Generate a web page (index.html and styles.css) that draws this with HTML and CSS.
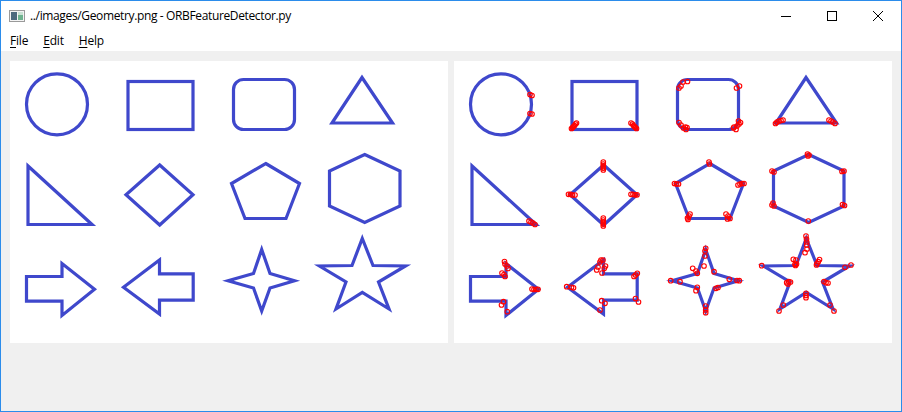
FILE: index.html
```html
<!DOCTYPE html>
<html>
<head>
<meta charset="utf-8">
<link rel="stylesheet" href="styles.css">
</head>
<body>
<div class="window">
  <div class="titlebar">
    <svg class="appicon" width="16" height="12" viewBox="0 0 16 12">
      <rect x="0.5" y="0.5" width="15" height="11" fill="#f4f4f4" stroke="#9a9a9a"/>
      <rect x="2" y="2" width="6" height="8" fill="#4d6a7e"/>
      <rect x="9" y="2" width="5" height="8" fill="#6fb38f"/>
      <rect x="9" y="2" width="5" height="3" fill="#c9e2d4"/>
    </svg>
    <div class="title">../images/Geometry.png - ORBFeatureDetector.py</div>
    <div class="caption">
      <div class="cbtn"><svg width="10" height="10" viewBox="0 0 10 10"><line x1="0" y1="5.5" x2="10" y2="5.5" stroke="#000" stroke-width="1"/></svg></div>
      <div class="cbtn"><svg width="10" height="10" viewBox="0 0 10 10"><rect x="0.5" y="0.5" width="9" height="9" fill="none" stroke="#000" stroke-width="1"/></svg></div>
      <div class="cbtn"><svg width="10" height="10" viewBox="0 0 10 10"><path d="M0 0L10 10M10 0L0 10" stroke="#000" stroke-width="1"/></svg></div>
    </div>
  </div>
  <div class="menubar">
    <span class="menu"><u>F</u>ile</span>
    <span class="menu"><u>E</u>dit</span>
    <span class="menu"><u>H</u>elp</span>
  </div>
  <div class="content">
    <div class="panel">
      <svg width="438" height="282" viewBox="0 0 438 282">
        <defs>
          <g id="shapes" fill="none" stroke="#3f48cc" stroke-width="3.2" stroke-linejoin="miter">
            <circle cx="47" cy="43.3" r="30.5"/>
            <rect x="118" y="20.5" width="65" height="48"/>
            <rect x="223.5" y="18.5" width="61" height="50" rx="10"/>
            <polygon points="352,16.5 322,62 382.5,62"/>
            <polygon points="18,105 18,163.5 82,163.5"/>
            <polygon points="149.7,104 183,133.7 149.7,164 116,133.7"/>
            <polygon points="255.7,102.5 289.5,122.5 276,157.5 235,157.5 221.5,122.5"/>
            <polygon points="354.7,93.5 390,110 390,145 354.7,161.5 319.5,145 319.5,110"/>
            <polygon points="16.5,215.5 52,215.5 52,202.5 84.5,228.3 52,254.5 52,240.2 16.5,240.2"/>
            <polygon points="113.5,226.3 149.5,199 149.5,212.8 183.2,212.8 183.2,239.2 149.5,239.2 149.5,253"/>
            <polygon points="251.7,188.5 260,212.5 284.5,219.7 260,227 251.7,250 243.5,227 218,219.7 243.5,212.5"/>
            <polygon points="352.3,177.5 363,204.5 395.5,205 368.5,221 379,248 352.3,231.5 326,248 336,221 309.5,205 342,204.5"/>
          </g>
        </defs>
        <use href="#shapes"/>
      </svg>
    </div>
    <div class="panel">
      <svg width="438" height="282" viewBox="0 0 438 282">
        <use href="#shapes"/>
        <g fill="none" stroke="#ff0000" stroke-width="1.1">
          <!-- circle -->
          <circle cx="76" cy="33.5" r="2.3"/><circle cx="78" cy="34.5" r="2.3"/>
          <circle cx="76" cy="52.5" r="2.3"/><circle cx="78" cy="53" r="2.3"/>
          <!-- rect -->
          <circle cx="117.5" cy="67.5" r="2.3"/><circle cx="118.5" cy="66.5" r="2.3"/><circle cx="119.5" cy="65.5" r="2.3"/><circle cx="120.5" cy="64.5" r="2.3"/><circle cx="121.5" cy="63" r="2.3"/><circle cx="122.5" cy="62" r="2.3"/><circle cx="118" cy="67" r="1.5"/><circle cx="120" cy="65" r="1.5"/>
          <circle cx="178.5" cy="63" r="2.3"/><circle cx="179.5" cy="64.5" r="2.3"/><circle cx="180.5" cy="65.5" r="2.3"/><circle cx="181.5" cy="66.5" r="2.3"/><circle cx="182.5" cy="67.5" r="2.3"/><circle cx="177" cy="62" r="2.3"/><circle cx="181" cy="66" r="1.5"/><circle cx="182" cy="67" r="1.5"/>
          <!-- rounded rect -->
          <circle cx="225" cy="27" r="2.3"/><circle cx="227" cy="25" r="2.3"/><circle cx="229" cy="21" r="2.3"/><circle cx="233.5" cy="20.5" r="2.3"/>
          <circle cx="282.5" cy="27" r="2.3"/><circle cx="285.5" cy="25" r="2.3"/>
          <circle cx="225" cy="61.5" r="2.3"/><circle cx="227" cy="64" r="2.3"/><circle cx="229.5" cy="67" r="2.3"/><circle cx="231.5" cy="66" r="2.3"/><circle cx="233" cy="66.5" r="2.3"/><circle cx="232" cy="68.5" r="2.3"/>
          <circle cx="280" cy="66" r="2.3"/><circle cx="282" cy="68.5" r="2.3"/><circle cx="283" cy="65" r="2.3"/><circle cx="285" cy="63" r="2.3"/><circle cx="286.5" cy="61.5" r="2.3"/><circle cx="284.5" cy="60" r="2.3"/><circle cx="279.5" cy="67" r="2.3"/>
          <!-- triangle -->
          <circle cx="321.5" cy="62.5" r="2.3"/><circle cx="323" cy="61" r="2.3"/><circle cx="325" cy="60" r="2.3"/><circle cx="327" cy="59.5" r="2.3"/><circle cx="329" cy="59" r="2.3"/><circle cx="322.5" cy="62" r="1.5"/>
          <circle cx="375" cy="59" r="2.3"/><circle cx="377" cy="60" r="2.3"/><circle cx="379" cy="61" r="2.3"/><circle cx="381" cy="62.5" r="2.3"/>
          <!-- right triangle -->
          <circle cx="75" cy="160" r="2.3"/><circle cx="77" cy="161" r="2.3"/><circle cx="79" cy="162" r="2.3"/><circle cx="81" cy="163.5" r="2.3"/>
          <!-- diamond -->
          <circle cx="149.3" cy="101" r="2.3"/><circle cx="149.3" cy="103" r="2.3"/><circle cx="149.3" cy="105" r="2.3"/><circle cx="149.3" cy="107" r="2.3"/><circle cx="149.3" cy="109" r="2.3"/><circle cx="149.3" cy="104" r="1.3"/><circle cx="149.3" cy="108" r="1.3"/>
          <circle cx="114.5" cy="133.3" r="2.3"/><circle cx="116.5" cy="133.3" r="2.3"/><circle cx="118.5" cy="134" r="2.3"/><circle cx="121" cy="134" r="2.3"/><circle cx="116" cy="133.5" r="1.3"/>
          <circle cx="177" cy="133.3" r="2.3"/><circle cx="179" cy="133.3" r="2.3"/><circle cx="181" cy="133.8" r="2.3"/><circle cx="183" cy="133.8" r="2.3"/><circle cx="182" cy="133.5" r="1.3"/>
          <circle cx="149.3" cy="157" r="2.3"/><circle cx="149.3" cy="159" r="2.3"/><circle cx="149.3" cy="161" r="2.3"/><circle cx="149.3" cy="163" r="2.3"/><circle cx="149.3" cy="165" r="2.3"/><circle cx="149.3" cy="160" r="1.3"/><circle cx="149.3" cy="164" r="1.3"/>
          <!-- pentagon -->
          <circle cx="255" cy="101" r="2.3"/><circle cx="255.5" cy="103" r="2.3"/>
          <circle cx="220.5" cy="122.5" r="2.3"/><circle cx="222.5" cy="123" r="2.3"/><circle cx="224.5" cy="123" r="2.3"/><circle cx="221.5" cy="122.5" r="1.3"/>
          <circle cx="284" cy="124" r="2.3"/><circle cx="286" cy="123" r="2.3"/><circle cx="288" cy="122.5" r="2.3"/><circle cx="290" cy="122.5" r="2.3"/><circle cx="287" cy="123" r="1.3"/>
          <circle cx="233.5" cy="157" r="2.3"/><circle cx="235" cy="155" r="2.3"/><circle cx="236" cy="153" r="2.3"/><circle cx="234" cy="158.5" r="2.3"/><circle cx="234.5" cy="157" r="1.3"/>
          <circle cx="272" cy="153" r="2.3"/><circle cx="274" cy="155" r="2.3"/><circle cx="276" cy="157.5" r="2.3"/><circle cx="273.5" cy="158" r="2.3"/><circle cx="275" cy="157" r="1.3"/>
          <!-- hexagon -->
          <circle cx="353.5" cy="93" r="2.3"/><circle cx="354" cy="95" r="2.3"/><circle cx="355" cy="94" r="2.3"/>
          <circle cx="318" cy="110" r="2.3"/><circle cx="320" cy="111" r="2.3"/><circle cx="319" cy="110.5" r="1.3"/>
          <circle cx="319" cy="142" r="2.3"/><circle cx="318" cy="144" r="2.3"/><circle cx="320" cy="145" r="2.3"/>
          <circle cx="388" cy="110.5" r="2.3"/><circle cx="390" cy="110" r="2.3"/><circle cx="389" cy="110.5" r="1.3"/>
          <circle cx="388.5" cy="143.5" r="2.3"/><circle cx="390.5" cy="144.5" r="2.3"/><circle cx="389.5" cy="144" r="1.3"/>
          <circle cx="354.3" cy="160" r="2.3"/>
          <!-- right arrow -->
          <circle cx="50.5" cy="200.5" r="2.3"/><circle cx="51" cy="203" r="2.3"/><circle cx="53" cy="205" r="2.3"/><circle cx="54" cy="207.5" r="2.3"/>
          <circle cx="48" cy="212" r="2.3"/><circle cx="50" cy="213.5" r="2.3"/><circle cx="51" cy="215.5" r="2.3"/>
          <circle cx="78" cy="228" r="2.3"/><circle cx="80" cy="228.5" r="2.3"/><circle cx="82" cy="228.3" r="2.3"/><circle cx="84" cy="228.3" r="2.3"/><circle cx="81" cy="228.3" r="1.3"/>
          <circle cx="49.5" cy="240.7" r="2.3"/><circle cx="47.5" cy="244" r="2.3"/><circle cx="53.3" cy="250.7" r="2.3"/>
          <!-- left arrow -->
          <circle cx="147" cy="199" r="2.3"/><circle cx="149" cy="199" r="2.3"/><circle cx="146" cy="201" r="2.3"/><circle cx="150.3" cy="207.3" r="2.3"/><circle cx="151.5" cy="205" r="2.3"/><circle cx="142.7" cy="209" r="2.3"/><circle cx="144" cy="206" r="2.3"/><circle cx="148" cy="212" r="2.3"/>
          <circle cx="112.7" cy="225.7" r="2.3"/><circle cx="117.5" cy="226.3" r="2.3"/><circle cx="119.5" cy="226.8" r="2.3"/>
          <circle cx="183.3" cy="212.3" r="2.3"/><circle cx="181.5" cy="214" r="2.3"/><circle cx="180" cy="215.5" r="2.3"/>
          <circle cx="181.5" cy="237.5" r="2.3"/><circle cx="184.5" cy="241" r="2.3"/>
          <circle cx="147.7" cy="239.7" r="2.3"/><circle cx="151" cy="242.3" r="2.3"/><circle cx="146" cy="249" r="2.3"/>
          <!-- four-point star -->
          <circle cx="251.7" cy="187.3" r="2.3"/><circle cx="251" cy="190" r="2.3"/><circle cx="251" cy="195" r="2.3"/><circle cx="250" cy="205" r="2.3"/>
          <circle cx="238.7" cy="207.3" r="2.3"/><circle cx="243.3" cy="212.3" r="2.3"/><circle cx="242" cy="210" r="2.3"/><circle cx="260" cy="210.7" r="2.3"/>
          <circle cx="216.7" cy="219.7" r="2.3"/><circle cx="226" cy="220.7" r="2.3"/>
          <circle cx="285.3" cy="219.7" r="2.3"/><circle cx="283" cy="219.5" r="2.3"/><circle cx="275.3" cy="218.3" r="2.3"/>
          <circle cx="243.3" cy="226.3" r="2.3"/><circle cx="242" cy="229.7" r="2.3"/><circle cx="262" cy="227.3" r="2.3"/><circle cx="264" cy="226.5" r="2.3"/>
          <circle cx="251.7" cy="245" r="2.3"/><circle cx="251.7" cy="251.7" r="2.3"/><circle cx="251.7" cy="249" r="2.3"/>
          <!-- five-point star -->
          <circle cx="352" cy="175" r="2.3"/><circle cx="352.5" cy="178" r="2.3"/><circle cx="352.7" cy="181" r="2.3"/><circle cx="352.7" cy="184" r="2.3"/><circle cx="351" cy="191.7" r="2.3"/><circle cx="353" cy="188" r="2.3"/>
          <circle cx="339.3" cy="198.3" r="2.3"/><circle cx="342" cy="199" r="2.3"/><circle cx="341" cy="203.3" r="2.3"/><circle cx="342.5" cy="203" r="2.3"/><circle cx="341.5" cy="204.5" r="2.3"/><circle cx="341.5" cy="203.5" r="1.3"/>
          <circle cx="364.3" cy="200.7" r="2.3"/><circle cx="363" cy="202.5" r="2.3"/><circle cx="362.5" cy="204" r="2.3"/><circle cx="365.5" cy="198.5" r="2.3"/>
          <circle cx="307.7" cy="204.7" r="2.3"/><circle cx="397" cy="204" r="2.3"/><circle cx="391" cy="206.3" r="2.3"/>
          <circle cx="332.7" cy="221.7" r="2.3"/><circle cx="334.7" cy="220.5" r="2.3"/><circle cx="336.5" cy="221" r="2.3"/><circle cx="334" cy="223" r="2.3"/>
          <circle cx="370" cy="220.5" r="2.3"/><circle cx="372" cy="221.7" r="2.3"/><circle cx="374" cy="222" r="2.3"/>
          <circle cx="352" cy="232.3" r="2.3"/><circle cx="352" cy="236.7" r="2.3"/><circle cx="352" cy="234.5" r="2.3"/>
          <circle cx="329.3" cy="244" r="2.3"/><circle cx="325" cy="250" r="2.3"/><circle cx="376" cy="244" r="2.3"/><circle cx="380" cy="250" r="2.3"/>
        </g>
      </svg>
    </div>
  </div>
</div>
</body>
</html>
```

FILE: styles.css
```css
html, body {
  margin: 0;
  padding: 0;
  background: #f0f0f0;
}
.window {
  box-sizing: border-box;
  width: 902px;
  height: 412px;
  border: 1px solid #2b8ceb;
  background: #f0f0f0;
  display: flex;
  flex-direction: column;
  font-family: "Open Sans", "Noto Sans", "Liberation Sans", sans-serif;
  overflow: hidden;
}
.titlebar {
  height: 29px;
  background: #ffffff;
  display: flex;
  align-items: center;
  flex-shrink: 0;
}
.appicon {
  margin-left: 8px;
  margin-top: 1px;
  flex-shrink: 0;
}
.title {
  margin-left: 5px;
  font-size: 12px;
  color: #000;
  white-space: nowrap;
  flex: 1;
  letter-spacing: -0.36px;
}
.caption {
  display: flex;
  height: 100%;
}
.cbtn {
  width: 46px;
  height: 29px;
  display: flex;
  align-items: center;
  justify-content: center;
}
.cbtn svg {
  display: block;
}
.menubar {
  height: 21px;
  background: #ffffff;
  display: flex;
  align-items: center;
  padding-left: 9px;
  flex-shrink: 0;
  font-size: 12px;
  color: #000;
}
.menu {
  margin-right: 15px;
  letter-spacing: -0.2px;
}
.menu u {
  text-decoration-thickness: 1px;
  text-underline-offset: 2px;
}
.content {
  flex: 1;
  display: flex;
  gap: 6px;
  padding: 10px 0 0 9px;
}
.panel {
  width: 438px;
  height: 282px;
  background: #ffffff;
}
.panel svg {
  display: block;
}
```
